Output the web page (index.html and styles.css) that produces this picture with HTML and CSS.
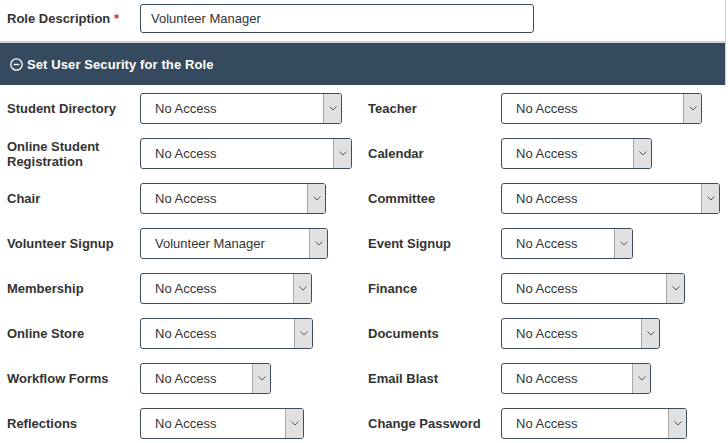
FILE: index.html
```html
<!DOCTYPE html>
<html>
<head>
<meta charset="utf-8">
<link rel="stylesheet" href="styles.css">
</head>
<body>
<div class="top">
  <div class="role-row">
    <label class="role-label">Role Description <span class="req">*</span></label>
    <div class="text-input">Volunteer Manager</div>
  </div>
  <div class="section-head">
    <svg class="collapse-icon" width="13" height="13" viewBox="0 0 13 13"><circle cx="6.5" cy="6.5" r="5.7" fill="none" stroke="#fff" stroke-width="1.3"/><line x1="3.6" y1="6.5" x2="9.4" y2="6.5" stroke="#fff" stroke-width="1.4"/></svg>
    <span>Set User Security for the Role</span>
  </div>
</div>

<div class="perm-grid">
  <div class="perm"><span class="perm-label">Student Directory</span><div class="select" style="width:202px"><span class="value">No Access</span><span class="arrow"><svg width="8" height="5" viewBox="0 0 8 5"><polyline points="0.5,0.5 4,4 7.5,0.5" fill="none" stroke="#555" stroke-width="1"/></svg></span></div></div>
  <div class="perm"><span class="perm-label">Teacher</span><div class="select" style="width:201px"><span class="value">No Access</span><span class="arrow"><svg width="8" height="5" viewBox="0 0 8 5"><polyline points="0.5,0.5 4,4 7.5,0.5" fill="none" stroke="#555" stroke-width="1"/></svg></span></div></div>

  <div class="perm"><span class="perm-label">Online Student Registration</span><div class="select" style="width:212px"><span class="value">No Access</span><span class="arrow"><svg width="8" height="5" viewBox="0 0 8 5"><polyline points="0.5,0.5 4,4 7.5,0.5" fill="none" stroke="#555" stroke-width="1"/></svg></span></div></div>
  <div class="perm"><span class="perm-label">Calendar</span><div class="select" style="width:151px"><span class="value">No Access</span><span class="arrow"><svg width="8" height="5" viewBox="0 0 8 5"><polyline points="0.5,0.5 4,4 7.5,0.5" fill="none" stroke="#555" stroke-width="1"/></svg></span></div></div>

  <div class="perm"><span class="perm-label">Chair</span><div class="select" style="width:186px"><span class="value">No Access</span><span class="arrow"><svg width="8" height="5" viewBox="0 0 8 5"><polyline points="0.5,0.5 4,4 7.5,0.5" fill="none" stroke="#555" stroke-width="1"/></svg></span></div></div>
  <div class="perm"><span class="perm-label">Committee</span><div class="select" style="width:219px"><span class="value">No Access</span><span class="arrow"><svg width="8" height="5" viewBox="0 0 8 5"><polyline points="0.5,0.5 4,4 7.5,0.5" fill="none" stroke="#555" stroke-width="1"/></svg></span></div></div>

  <div class="perm"><span class="perm-label">Volunteer Signup</span><div class="select" style="width:188px"><span class="value">Volunteer Manager</span><span class="arrow"><svg width="8" height="5" viewBox="0 0 8 5"><polyline points="0.5,0.5 4,4 7.5,0.5" fill="none" stroke="#555" stroke-width="1"/></svg></span></div></div>
  <div class="perm"><span class="perm-label">Event Signup</span><div class="select" style="width:132px"><span class="value">No Access</span><span class="arrow"><svg width="8" height="5" viewBox="0 0 8 5"><polyline points="0.5,0.5 4,4 7.5,0.5" fill="none" stroke="#555" stroke-width="1"/></svg></span></div></div>

  <div class="perm"><span class="perm-label">Membership</span><div class="select" style="width:172px"><span class="value">No Access</span><span class="arrow"><svg width="8" height="5" viewBox="0 0 8 5"><polyline points="0.5,0.5 4,4 7.5,0.5" fill="none" stroke="#555" stroke-width="1"/></svg></span></div></div>
  <div class="perm"><span class="perm-label">Finance</span><div class="select" style="width:184px"><span class="value">No Access</span><span class="arrow"><svg width="8" height="5" viewBox="0 0 8 5"><polyline points="0.5,0.5 4,4 7.5,0.5" fill="none" stroke="#555" stroke-width="1"/></svg></span></div></div>

  <div class="perm"><span class="perm-label">Online Store</span><div class="select" style="width:173px"><span class="value">No Access</span><span class="arrow"><svg width="8" height="5" viewBox="0 0 8 5"><polyline points="0.5,0.5 4,4 7.5,0.5" fill="none" stroke="#555" stroke-width="1"/></svg></span></div></div>
  <div class="perm"><span class="perm-label">Documents</span><div class="select" style="width:159px"><span class="value">No Access</span><span class="arrow"><svg width="8" height="5" viewBox="0 0 8 5"><polyline points="0.5,0.5 4,4 7.5,0.5" fill="none" stroke="#555" stroke-width="1"/></svg></span></div></div>

  <div class="perm"><span class="perm-label">Workflow Forms</span><div class="select" style="width:131px"><span class="value">No Access</span><span class="arrow"><svg width="8" height="5" viewBox="0 0 8 5"><polyline points="0.5,0.5 4,4 7.5,0.5" fill="none" stroke="#555" stroke-width="1"/></svg></span></div></div>
  <div class="perm"><span class="perm-label">Email Blast</span><div class="select" style="width:150px"><span class="value">No Access</span><span class="arrow"><svg width="8" height="5" viewBox="0 0 8 5"><polyline points="0.5,0.5 4,4 7.5,0.5" fill="none" stroke="#555" stroke-width="1"/></svg></span></div></div>

  <div class="perm"><span class="perm-label">Reflections</span><div class="select" style="width:164px"><span class="value">No Access</span><span class="arrow"><svg width="8" height="5" viewBox="0 0 8 5"><polyline points="0.5,0.5 4,4 7.5,0.5" fill="none" stroke="#555" stroke-width="1"/></svg></span></div></div>
  <div class="perm"><span class="perm-label">Change Password</span><div class="select" style="width:186px"><span class="value">No Access</span><span class="arrow"><svg width="8" height="5" viewBox="0 0 8 5"><polyline points="0.5,0.5 4,4 7.5,0.5" fill="none" stroke="#555" stroke-width="1"/></svg></span></div></div>
</div>
</body>
</html>
```

FILE: styles.css
```css
html, body {
  margin: 0;
  padding: 0;
  background: #fff;
}

body {
  font-family: "Liberation Sans", Arial, sans-serif;
  font-size: 13px;
  color: #333;
}

.top {
  width: 725px;
  border-right: 1px solid #cfcfcf;
}

.role-row {
  display: flex;
  align-items: center;
  padding: 4px 0 8px 7px;
}

.role-label {
  width: 133px;
  flex-shrink: 0;
  font-weight: bold;
}

.req {
  color: #d0312d;
}

.text-input {
  box-sizing: border-box;
  width: 394px;
  height: 29px;
  border: 1px solid #3d4b5a;
  border-radius: 3px;
  padding-left: 10px;
  display: flex;
  align-items: center;
}

.section-head {
  border-top: 2px solid #d2d2d2;
  height: 42px;
  background: #364a5f;
  color: #fff;
  font-weight: bold;
  display: flex;
  align-items: center;
  gap: 4px;
  padding-left: 10px;
  letter-spacing: 0.1px;
}

.collapse-icon {
  display: block;
}

.perm-grid {
  display: grid;
  grid-template-columns: 361px 360px;
  row-gap: 14px;
  padding-top: 8px;
}

.perm {
  display: flex;
  align-items: center;
  padding-left: 7px;
  height: 31px;
}

.perm-label {
  width: 133px;
  flex-shrink: 0;
  font-weight: bold;
  line-height: 15px;
  padding-right: 10px;
  box-sizing: border-box;
}

.select {
  box-sizing: border-box;
  height: 31px;
  border: 1px solid #3d4b5a;
  border-radius: 3px;
  display: flex;
  align-items: stretch;
  overflow: hidden;
}

.value {
  flex: 1;
  display: flex;
  align-items: center;
  padding-left: 14px;
  white-space: nowrap;
  overflow: hidden;
}

.arrow {
  width: 17px;
  flex-shrink: 0;
  background: #e1e1e1;
  border-left: 1px solid #a8a8a8;
  display: flex;
  align-items: center;
  justify-content: center;
}

.arrow svg {
  display: block;
}
```
